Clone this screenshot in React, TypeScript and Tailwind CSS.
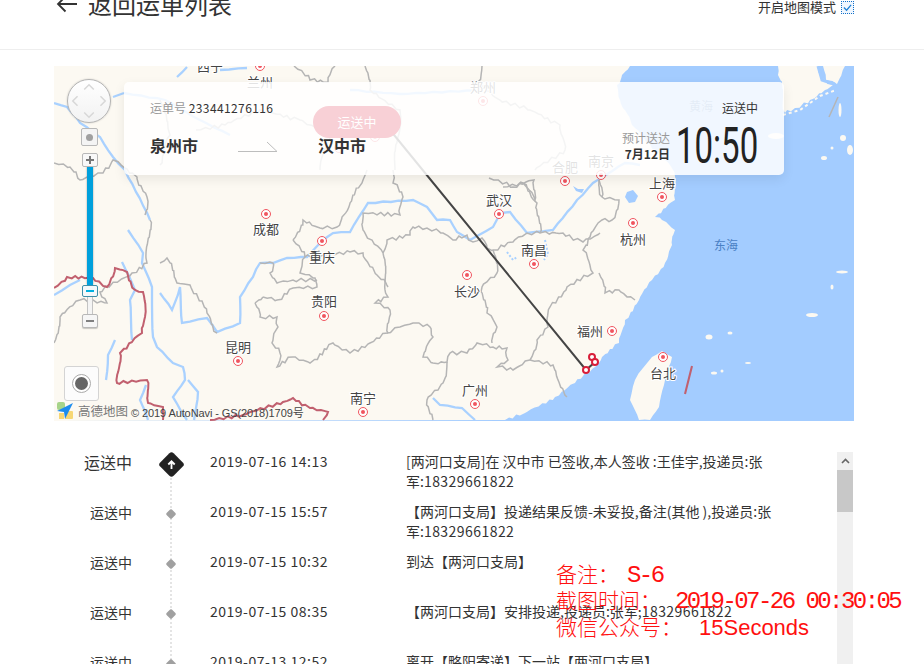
import React from "react";

type P = [number, number];

function rough(pts: P[], amp = 1.4, step = 6): string {
  let d = "";
  let n = 0;
  pts.forEach((p, i) => {
    if (i === 0) {
      d += `M${p[0]} ${p[1]}`;
      return;
    }
    const a = pts[i - 1];
    const len = Math.hypot(p[0] - a[0], p[1] - a[1]);
    const k = Math.max(1, Math.round(len / step));
    for (let j = 1; j <= k; j++) {
      n++;
      const t = j / k;
      const off = j === k ? 0 : amp;
      const x = a[0] + (p[0] - a[0]) * t + Math.sin(n * 12.9898) * off;
      const y = a[1] + (p[1] - a[1]) * t + Math.sin(n * 78.233) * off;
      d += `L${x.toFixed(1)} ${y.toFixed(1)}`;
    }
  });
  return d;
}

const provinces: P[][] = [
  [[383, 253], [387, 240], [410, 235], [413, 227], [427, 228], [443, 233], [453, 240], [467, 235], [473, 242], [482, 238], [487, 248], [493, 250], [513, 242], [527, 233], [540, 233], [563, 233], [583, 242], [600, 233]],
  [[383, 253], [385, 283], [388, 297], [375, 303], [390, 310], [388, 333], [400, 327], [413, 323], [430, 327], [433, 337], [423, 357], [433, 363], [447, 362], [450, 353], [467, 353], [477, 343], [493, 347], [507, 348], [508, 360], [497, 367], [513, 370], [530, 360]],
  [[493, 250], [497, 273], [482, 287], [487, 313], [497, 327], [492, 343]],
  [[530, 360], [537, 340], [548, 327], [550, 307], [567, 287], [593, 273], [583, 250], [590, 237], [602, 220], [612, 220], [619, 200], [602, 197], [599, 180]],
  [[530, 360], [553, 365], [567, 397]],
  [[447, 362], [443, 383], [427, 400], [433, 420]],
  [[255, 303], [260, 317], [277, 317], [278, 327], [272, 343], [280, 353], [277, 367], [293, 357], [310, 363], [333, 343], [350, 353], [370, 343], [388, 333]],
  [[263, 297], [255, 303]],
  [[263, 297], [277, 300], [293, 288], [317, 287], [315, 278], [300, 273], [305, 257], [350, 252], [363, 253], [377, 275], [388, 287]],
  [[54, 343], [60, 317], [80, 300], [107, 303], [100, 292], [132, 273], [147, 263], [150, 220]],
  [[160, 263], [167, 258], [177, 283], [190, 285], [207, 313], [217, 333]],
  [[293, 240], [303, 220], [320, 228], [337, 227], [342, 217], [362, 183], [367, 170]],
  [[293, 240], [305, 257]],
  [[260, 263], [273, 263], [270, 273], [277, 283], [293, 280], [317, 280]],
  [[393, 170], [393, 183], [403, 197], [400, 215], [363, 213], [363, 230], [372, 240], [383, 253]],
  [[503, 187], [523, 183], [537, 203], [540, 233]],
  [[489, 178], [513, 187], [534, 180], [535, 200], [523, 183]],
  [[599, 180], [602, 197]],
  [[599, 273], [605, 293], [619, 290], [635, 300]],
  [[54, 163], [70, 167], [80, 180], [103, 173], [113, 160], [137, 177], [147, 197], [145, 215]],
  [[294, 66], [310, 80], [328, 82], [335, 66]],
  [[365, 66], [370, 90], [400, 110], [395, 170]],
  [[482, 66], [478, 82], [500, 100], [530, 110], [560, 125], [565, 150], [535, 170]],
  [[196, 130], [225, 125], [260, 110], [300, 120], [330, 135], [320, 170]],
  [[160, 100], [170, 135], [160, 165]],
];

const rivers: P[][] = [
  [[128, 230], [143, 253], [142, 263], [152, 287], [153, 337], [157, 347], [173, 363], [183, 367], [185, 380], [173, 397], [187, 420]],
  [[122, 262], [135, 290], [130, 300], [132, 340]],
  [[160, 293], [172, 310], [180, 287], [182, 323], [207, 318], [217, 332], [240, 323], [240, 297], [253, 277], [260, 263], [273, 263], [287, 258], [307, 257], [320, 243], [333, 233], [350, 232], [368, 203], [413, 200], [427, 207], [437, 220], [450, 220], [457, 232], [470, 240], [493, 227], [500, 213], [510, 212], [527, 233], [553, 230], [577, 200], [593, 183], [625, 163], [640, 165]],
  [[54, 103], [67, 107], [80, 123], [100, 137], [113, 157], [125, 170], [150, 220]],
  [[177, 77], [187, 67]],
  [[220, 70], [247, 68]],
  [[113, 97], [124, 93]],
  [[124, 93], [165, 100], [200, 120], [230, 135]],
  [[483, 90], [400, 94], [350, 90]],
  [[54, 295], [70, 285], [80, 280]],
  [[115, 340], [108, 355], [106, 380]],
  [[194, 420], [198, 392], [188, 380]],
  [[433, 398], [440, 405], [462, 408], [475, 420]],
  [[146, 385], [140, 400], [148, 420]],
];

const national: P[][] = [
  [[54, 288], [67, 277], [93, 278], [107, 287], [115, 268], [127, 272], [135, 290], [143, 292], [145, 317], [142, 333], [120, 353], [117, 383], [147, 380], [148, 403], [163, 407], [163, 420]],
  [[210, 420], [243, 415], [283, 402], [293, 398], [310, 408], [328, 412], [323, 420]],
];

const coast: P[] = [[630, 66], [622, 75], [617, 85], [620, 100], [628, 115], [632, 125], [645, 140], [659, 153], [670, 165], [675, 177], [675, 200], [655, 217], [662, 220], [675, 230], [672, 245], [665, 263], [652, 280], [639, 300], [625, 320], [619, 343], [602, 357], [595, 367], [575, 383], [555, 397], [525, 413], [505, 420]];
const taiwan: P[] = [[652, 357], [662, 351], [672, 357], [667, 372], [664, 385], [659, 407], [650, 420], [639, 420], [630, 400], [635, 380], [643, 368]];
const korea: P[] = [[778, 66], [778, 75], [783, 95], [785, 113], [795, 108], [810, 100], [825, 90], [833, 85], [825, 80], [818, 72], [818, 66]];
const korea2: P[] = [[823, 66], [826, 80], [837, 84], [845, 66]];

const islands: [number, number, number, number][] = [
  [776, 136, 8, 3], [842, 272, 6, 1.5], [832, 287, 1.5, 2.5], [812, 315, 6, 2], [709, 337, 3.5, 2.5], [730, 333, 2.5, 1.5],
  [714, 373, 3, 1.5], [748, 363, 3, 1], [722, 371, 1.5, 1.5], [840, 110, 1.5, 7], [824, 158, 3, 2], [843, 138, 3, 3], [850, 150, 3, 5], [832, 148, 1.5, 1.5],
];

const pins: P[] = [[260, 66], [483, 101], [565, 181], [601, 175], [662, 197], [499, 214], [633, 223], [266, 214], [322, 241], [324, 316], [238, 361], [467, 275], [534, 264], [612, 331], [663, 357], [363, 412], [475, 404], [375, 137], [339, 148]];

const labels: [string, number, number][] = [
  ["兰州", 260, 87], ["郑州", 483, 92], ["合肥", 565, 172], ["南京", 601, 166], ["上海", 662, 188], ["武汉", 499, 205], ["杭州", 633, 244],
  ["成都", 266, 234], ["重庆", 322, 262], ["贵阳", 324, 306], ["昆明", 238, 352], ["长沙", 467, 296], ["南昌", 534, 255], ["福州", 590, 336], ["台北", 663, 378], ["南宁", 363, 403], ["广州", 475, 395], ["西宁", 210, 71],
];

function MapArt() {
  return (
    <svg viewBox="54 66 800 355" className="block w-[800px] h-[355px]">
      <rect x="54" y="66" width="800" height="355" fill="#a3ccff" />
      <path d={`M54 66L630 66${rough(coast, 1.2, 4).replace(/^M[^L]*/, "")}L54 421Z`} fill="#fcf9f2" />
      <path d={rough(taiwan, 0.5, 6) + "Z"} fill="#fcf9f2" />
      <path d={rough(korea, 1.8, 4) + "Z"} fill="#fcf9f2" />
      <path d={rough(korea2, 1, 5) + "Z"} fill="#fcf9f2" />
      {islands.map((e, i) => (
        <ellipse key={i} cx={e[0]} cy={e[1]} rx={e[2]} ry={e[3]} fill="#fcf9f2" />
      ))}
      <path d="M783 115L800 110L820 96L836 90" fill="none" stroke="#fcf9f2" strokeWidth="2" strokeDasharray="3 3" />
      <path d="M818 66L822 80L834 84L837 96" fill="none" stroke="#a3ccff" strokeWidth="3" />
      <path d="M507 252l6 8l4 -3M545 240l3 14l-4 6" fill="none" stroke="#a9d1ff" strokeWidth="2" strokeDasharray="2 2" />
      <path d="M627 192l6 -2l5 6l-3 6l-6 1l-4 -6z" fill="#a3ccff" />
      <path d="M573 186l5 3l6 0l-2 4l-6 -2z" fill="#a3ccff" />
      {rivers.map((r, i) => (
        <path key={i} d={rough(r, 0.5, 8)} fill="none" stroke="#a9d1ff" strokeWidth="2.3" />
      ))}
      {provinces.map((r, i) => (
        <path key={i} d={rough(r, 1.7, 4)} fill="none" stroke="#b5b5b5" strokeWidth="1.5" />
      ))}
      {national.map((r, i) => (
        <path key={i} d={rough(r, 1.3, 4)} fill="none" stroke="#c1606f" strokeWidth="2" />
      ))}
      <path d="M692 366L685 394" stroke="#c1606f" strokeWidth="2" />
      <path d="M838 97L829 117" stroke="#b5b5b5" strokeWidth="1.5" />
      {pins.map((p, i) => (
        <g key={i}>
          <circle cx={p[0]} cy={p[1]} r="4.5" fill="#fff" stroke="#f0555f" strokeWidth="1" />
          <circle cx={p[0]} cy={p[1]} r="2" fill="#f0555f" />
        </g>
      ))}
      {labels.map((l, i) => (
        <text key={i} x={l[1]} y={l[2]} textAnchor="middle" fontSize="13" fill="#444" stroke="#fff" strokeWidth="2" style={{ paintOrder: "stroke" }} className="font-['Noto_Sans_CJK_SC',sans-serif]">
          {l[0]}
        </text>
      ))}
      <text x="726" y="250" textAnchor="middle" fontSize="12" fill="#4a80c4" className="font-['Noto_Sans_CJK_SC',sans-serif]">东海</text>
      <text x="701" y="111" textAnchor="middle" fontSize="12" fill="#4a80c4" className="font-['Noto_Sans_CJK_SC',sans-serif]">黄海</text>
      <path d="M390 130L586 370L595 362L592 357" fill="none" stroke="#454545" strokeWidth="2" />
      {([[592, 357], [595, 362], [586, 370]] as P[]).map((p, i) => (
        <circle key={i} cx={p[0]} cy={p[1]} r="3" fill="#fff" stroke="#d81e3a" strokeWidth="2" />
      ))}
    </svg>
  );
}

function MapControls() {
  return (
    <>
      <div className="absolute left-[13px] top-[13px] w-[44px] h-[44px] rounded-full border border-[#b4b4b4] bg-gradient-to-b from-white to-[#f2f2f2] shadow-[0_0_2px_rgba(0,0,0,0.2)]">
        <svg viewBox="0 0 44 44" className="w-full h-full" fill="none" stroke="#d8d8d8" strokeWidth="1.6">
          <path d="M17 10l5-5l5 5M17 34l5 5l5-5M10 17l-5 5l5 5M34 17l5 5l-5 5" />
        </svg>
      </div>
      <div className="absolute left-[27px] top-[62px] w-[17px] h-[18px] rounded-[2px] border border-[#b8b8b8] bg-[#f4f4f4] flex items-center justify-center">
        <span className="w-[7px] h-[7px] rounded-full bg-[#a0a0a0]" />
      </div>
      <div className="absolute left-[33px] top-[99px] w-[6px] h-[120px] bg-[#00a0dc] shadow-[0_0_2px_rgba(0,0,0,0.4)]" />
      <div className="absolute left-[33px] top-[230px] w-[6px] h-[22px] bg-[#f4f4f4] border-x border-[#c4c4c4]" />
      <div className="absolute left-[28px] top-[87px] w-[16px] h-[14px] rounded-[2px] border border-[#b8b8b8] bg-[#f8f8f8] flex items-center justify-center">
        <svg width="10" height="10" viewBox="0 0 10 10"><path d="M5 1v8M1 5h8" stroke="#777" strokeWidth="2" /></svg>
      </div>
      <div className="absolute left-[28px] top-[219px] w-[16px] h-[12px] rounded-[2px] border border-[#3f8fa8] bg-[#f4f8fa] flex items-center justify-center">
        <span className="w-[8px] h-[2px] bg-[#00b0e0]" />
      </div>
      <div className="absolute left-[28px] top-[248px] w-[16px] h-[14px] rounded-[2px] border border-[#b8b8b8] bg-[#f6f6f6] shadow-[0_1px_1px_rgba(0,0,0,0.2)] flex items-center justify-center">
        <span className="w-[8px] h-[2px] bg-[#808080]" />
      </div>
      <div className="absolute left-[10px] top-[300px] w-[35px] h-[35px] rounded-[3px] border border-[#d4d4d4] bg-[#fcfcfc] flex items-center justify-center">
        <span className="w-[19px] h-[19px] rounded-full border border-[#aaa] bg-white flex items-center justify-center">
          <span className="w-[13px] h-[13px] rounded-full bg-[#666]" />
        </span>
      </div>
      <div className="absolute left-[2px] top-[336px] flex items-center">
        <svg width="18" height="18" viewBox="0 0 18 18">
          <rect x="1" y="0" width="8" height="8" rx="2" fill="#a7d489" />
          <rect x="9" y="9" width="8" height="8" rx="1" fill="#f7d774" />
          <rect x="3" y="11" width="5" height="6" fill="#f7d774" />
          <path d="M17 1L1 9l7 1l1 7z" fill="#1c8cee" />
        </svg>
        <span className="ml-[4px] text-[12.5px] leading-none text-[#777] font-['Noto_Sans_CJK_SC',sans-serif] mt-[1px]">高德地图</span>
        <span className="ml-[3px] text-[11px] tracking-[-0.1px] leading-none text-[#444] font-['Liberation_Sans','Noto_Sans_CJK_SC',sans-serif] mt-[5px] whitespace-nowrap">© 2019 AutoNavi - GS(2018)1709号</span>
      </div>
    </>
  );
}

function InfoCard() {
  return (
    <div className="absolute left-[70px] top-[16px] w-[660px] h-[93px] rounded-[5px] bg-white/85 shadow-[0_4px_12px_rgba(0,0,0,0.08)] pl-[26px] pr-[26px] pt-[17px] flex justify-between">
      <div>
        <div className="text-[12px] leading-[18px] whitespace-nowrap text-[#999]">
          运单号 <span className="text-[#333] tracking-[0.4px]">233441276116</span>
        </div>
        <div className="mt-[16px] flex items-center text-[16px] leading-[24px] font-bold text-[#333]">
          <span className="w-[48px]">泉州市</span>
          <svg width="40" height="12" viewBox="0 0 40 12" className="ml-[40px] mt-[3px]" fill="none" stroke="#bdbdbd" strokeWidth="1">
            <path d="M0 10.5H39L29 1" />
          </svg>
          <span className="ml-[40px] w-[48px] whitespace-nowrap">汉中市</span>
        </div>
      </div>
      <div className="flex flex-col items-end">
        <div className="text-[12px] leading-[18px] text-[#333]">运送中</div>
        <div className="mt-[7px] flex items-center">
          <div className="flex flex-col items-end mr-[6px] text-[12px] leading-[16px]">
            <span className="text-[#999]">预计送达</span>
            <span className="font-bold text-[#333]">7月12日</span>
          </div>
          <span className="inline-block w-[82px] text-[50px] leading-[44px] text-[#222] whitespace-nowrap font-['Roboto',sans-serif] font-normal origin-left scale-x-[0.66]">10:50</span>
        </div>
      </div>
      <div className="absolute left-[189px] top-[24px] w-[88px] h-[32px] rounded-full bg-[#f8d0d6] text-white text-[13px] flex items-center justify-center">运送中</div>
    </div>
  );
}

const Num = ({ children }: { children: React.ReactNode }) => <span className="tracking-[0.45px]">{children}</span>;

const rows = [
  { time: "2019-07-16 14:13", text: <>[两河口支局]在 汉中市 已签收,本人签收 :王佳宇,投递员:张<br />军:<Num>18329661822</Num></> },
  { time: "2019-07-15 15:57", text: <>【两河口支局】投递结果反馈-未妥投,备注(其他 ),投递员:张<br />军:<Num>18329661822</Num></> },
  { time: "2019-07-15 10:32", text: <>到达【两河口支局】</> },
  { time: "2019-07-15 08:35", text: <>【两河口支局】安排投递,投递员:张军;<Num>18329661822</Num></> },
  { time: "2019-07-13 12:52", text: <>离开【略阳寄递】下一站【两河口支局】</> },
];

function Timeline() {
  return (
    <div className="mt-[30px] h-[214px] flex overflow-hidden">
      <div className="w-[783px] relative">
        <div className="absolute left-[116px] top-[20px] h-[200px] border-l-2 border-dotted border-[#e4e4e4]" />
        {rows.map((r, i) => (
          <div key={i} className="h-[50px] flex text-[14px] leading-[20px] text-[#333]">
            <div className={`w-[78px] text-right whitespace-nowrap mt-[1px] ${i === 0 ? "text-[16px]" : "text-[14px]"}`}>运送中</div>
            <div className="w-[78px] relative">
              {i === 0 ? (
                <span className="absolute left-[30px] top-[4px] w-[19px] h-[19px] rotate-45 rounded-[3px] bg-[#222] flex items-center justify-center">
                  <svg width="11" height="11" viewBox="0 0 12 12" className="-rotate-45" fill="none" stroke="#fff" strokeWidth="2"><path d="M6 11V2M2.5 6L6 2.5l3.5 3.5" /></svg>
                </span>
              ) : (
                <span className="absolute left-[36px] top-[10px] w-[6px] h-[6px] rotate-45 rounded-[1px] bg-[#a0a0a0] scale-125" />
              )}
            </div>
            <div className="w-[196px] tracking-[0.5px]">{r.time}</div>
            <div className="w-[375px] whitespace-nowrap">{r.text}</div>
          </div>
        ))}
      </div>
      <div className="w-[16px] h-[214px] mt-[1px] bg-[#f0f0f0] flex flex-col">
        <div className="h-[18px] flex items-center justify-center">
          <svg width="9" height="6" viewBox="0 0 9 6" fill="none" stroke="#666" strokeWidth="1.6"><path d="M1 5l3.5-3.5L8 5" /></svg>
        </div>
        <div className="h-[42px] bg-[#c8c8c8]" />
      </div>
    </div>
  );
}

export default function App() {
  return (
    <div className="relative w-[924px] h-[664px] overflow-hidden bg-white text-[#333] font-['Noto_Sans_CJK_SC','Liberation_Sans',sans-serif]">
      <header className="h-[50px] border-b border-[#eeeeee] pl-[56px] pr-[70px] flex justify-between items-start">
        <div className="flex items-center -mt-[14px] text-[24px] leading-[36px] text-[#333]">
          <svg width="22" height="18" viewBox="0 0 22 18" fill="none" stroke="#333" strokeWidth="1.8"><path d="M21 9H2M9.5 1.5L2 9l7.5 7.5" /></svg>
          <span className="ml-[10px]">返回运单列表</span>
        </div>
        <div className="flex items-center text-[13px] leading-[14px] h-[14px] text-[#333]">
          <span>开启地图模式</span>
          <span className="ml-[5px] w-[13px] h-[13px] border border-dotted border-[#1270c8] bg-[#f0f7ff] flex items-center justify-center">
            <svg width="9" height="9" viewBox="0 0 10 10" fill="none" stroke="#1b7fd6" strokeWidth="1.4"><path d="M1 5l3 3L9 2" /></svg>
          </span>
        </div>
      </header>
      <main className="pl-[54px] pt-[16px] w-[854px]">
        <section className="relative h-[355px] overflow-hidden">
          <MapArt />
          <InfoCard />
          <MapControls />
        </section>
        <Timeline />
      </main>
      <div className="absolute left-[556px] top-[563px] text-[#ff1010] whitespace-nowrap font-['Liberation_Mono','Noto_Sans_CJK_SC',monospace] text-[24px] leading-[25px] tracking-[-2.55px]">
        <div className="flex items-baseline"><span className="text-[21px] tracking-normal font-light w-[71px]">备注：</span><span>S-6</span></div>
        <div className="flex items-baseline"><span className="text-[21px] tracking-normal font-light w-[119px]">截图时间：</span><span>2019-07-26 00:30:05</span></div>
        <div className="flex items-baseline"><span className="text-[21px] tracking-normal font-light w-[143px]">微信公众号：</span><span className="font-['Liberation_Sans',sans-serif] text-[22px] tracking-normal">15Seconds</span></div>
      </div>
    </div>
  );
}
